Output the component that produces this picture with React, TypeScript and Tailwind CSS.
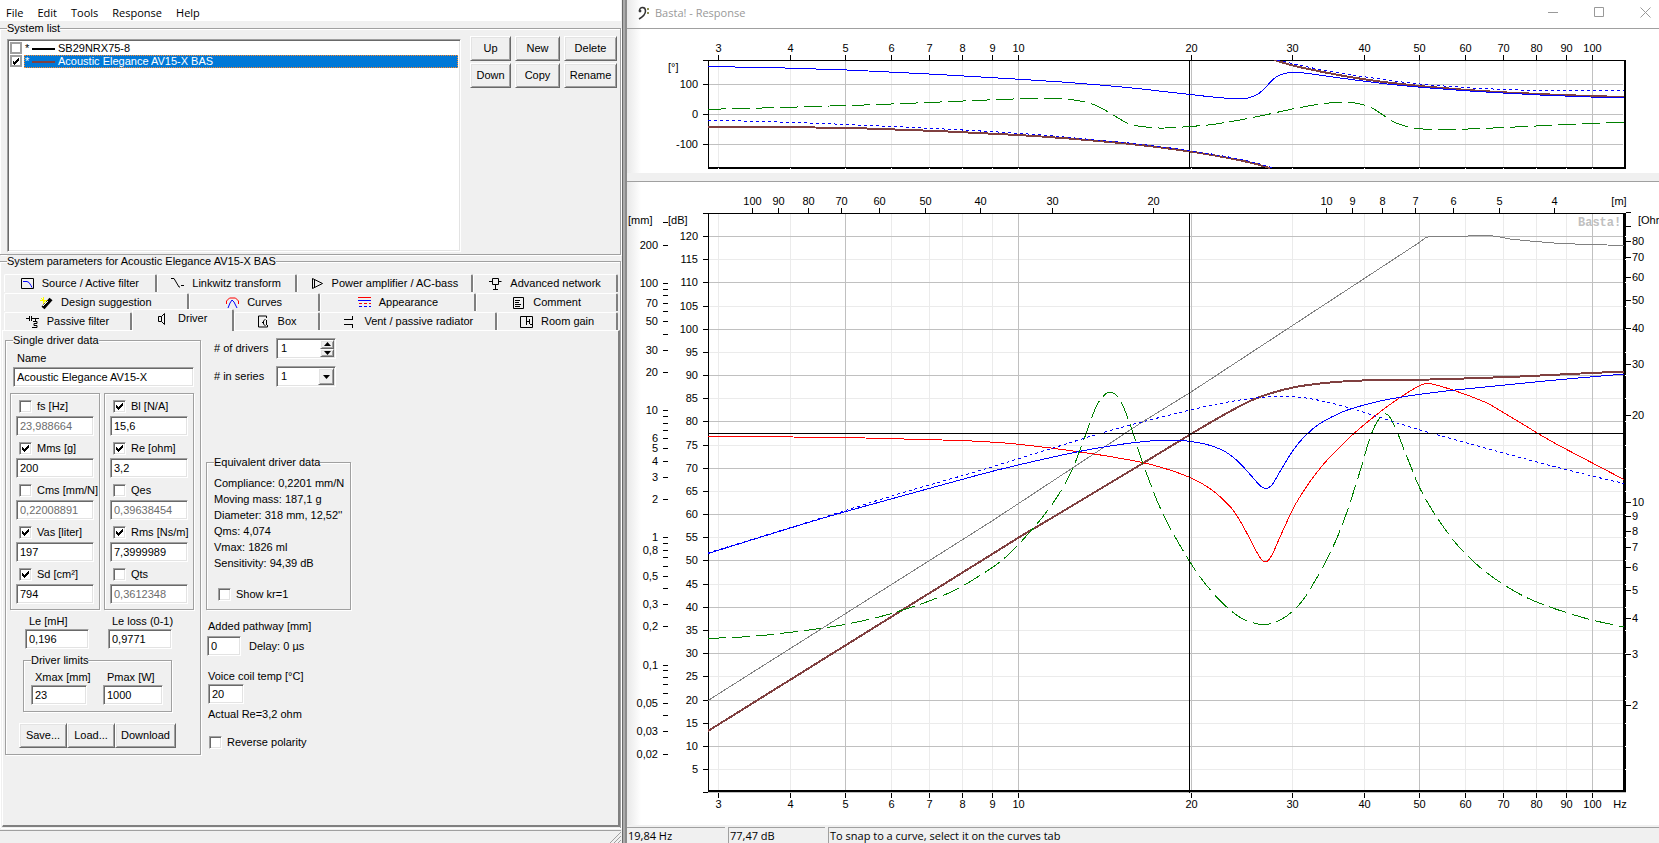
import { ReactNode, useState } from "react";

const sunken =
  "border border-t-[#a0a0a0] border-l-[#a0a0a0] border-r-white border-b-white shadow-[inset_1px_1px_0_#696969,inset_-1px_-1px_0_#e3e3e3]";
const raised =
  "border border-t-white border-l-white border-r-[#696969] border-b-[#696969] shadow-[inset_1px_1px_0_#e3e3e3,inset_-1px_-1px_0_#a0a0a0] bg-[#f0f0f0]";
const etched =
  "border border-[#a0a0a0] shadow-[inset_1px_1px_0_#fff,1px_1px_0_#fff]";

type Point = [number, number];

/* ---------- small controls ---------- */

const Check = ({
  id,
  label,
  checked = false,
}: {
  id: string;
  label: string;
  checked?: boolean;
}) => {
  const [on, setOn] = useState(checked);
  return (
    <div className="flex items-center gap-[5px] whitespace-nowrap">
      <span className="relative flex">
        <input
          id={id}
          type="checkbox"
          checked={on}
          onChange={() => setOn(!on)}
          className={`h-[13px] w-[13px] appearance-none bg-white ${sunken}`}
        />
        {on && <Tick />}
      </span>
      <label htmlFor={id}>{label}</label>
    </div>
  );
};

const Tick = () => (
  <svg
    viewBox="0 0 13 13"
    className="pointer-events-none absolute inset-0 h-full w-full"
  >
    <path d="M3 5v3l2 2 5-5v-3l-5 5z" fill="#000" shapeRendering="crispEdges" />
  </svg>
);

const Field = ({
  id,
  value,
  disabled = false,
  className = "w-full",
}: {
  id: string;
  value: string;
  disabled?: boolean;
  className?: string;
}) => (
  <input
    id={id}
    type="text"
    aria-label={id}
    defaultValue={value}
    disabled={disabled}
    className={`h-5 min-w-0 bg-white px-[3px] text-black disabled:text-[#6d6d6d] ${sunken} ${className}`}
  />
);

const Group = ({
  title,
  className = "",
  children,
}: {
  title: string;
  className?: string;
  children: ReactNode;
}) => (
  <fieldset className={`min-w-0 ${etched} ${className}`}>
    <legend className="ml-[7px] bg-[#f0f0f0] leading-[13px]">{title}</legend>
    {children}
  </fieldset>
);

const PushButton = ({ children }: { children: ReactNode }) => (
  <button type="button" className={`h-[25px] px-1 ${raised}`}>
    {children}
  </button>
);

/* ---------- system list ---------- */

const systems = [
  { name: "SB29NRX75-8", color: "bg-black", checked: false },
  { name: "Acoustic Elegance AV15-X BAS", color: "bg-[#804040]", checked: true },
];

const SystemList = () => (
  <Group title="System list" className="mt-px border-l-0">
    <div className="flex items-start gap-[9px] pr-[3px] pb-[2px] pl-[7px]">
      <ul className={`mt-1 h-[213px] flex-1 bg-white p-[2px] ${sunken}`}>
        {systems.map((s, i) => (
          <li key={s.name} className="flex h-[13px] items-stretch">
            <span className="relative mr-[2px] flex">
              <input
                id={`system-${i}`}
                type="checkbox"
                defaultChecked={s.checked}
                className="h-3 w-3 appearance-none border-2 border-[#a0a0a0] bg-white"
              />
              {s.checked && <Tick />}
            </span>
            <label
              htmlFor={`system-${i}`}
              className={`flex flex-1 items-center border border-dotted leading-[11px] ${
                s.checked
                  ? "border-[#ff8728] bg-[#0078d7] text-white"
                  : "border-white"
              }`}
            >
              <span className="w-[7px]">*</span>
              <span className={`mr-[3px] h-[2px] w-[23px] ${s.color}`} />
              {s.name}
            </label>
          </li>
        ))}
      </ul>
      <div className="mt-px grid grid-cols-[41px_45px_53px] gap-x-1 gap-y-[2px]">
        {["Up", "New", "Delete", "Down", "Copy", "Rename"].map((b) => (
          <PushButton key={b}>{b}</PushButton>
        ))}
      </div>
    </div>
  </Group>
);

/* ---------- tabs ---------- */

const icons: Record<string, ReactNode> = {
  source: (
    <>
      <path d="M.5 1.500h12v10h-12z" />
      <path d="M2 4.500h4l2 1 2 3 1 2" stroke="#00f" />
    </>
  ),
  linkwitz: <path d="M0 1.500h3l5 8.500h1M10 8.500h3" />,
  amp: <path d="M1.500 1.500v10l10-5zM3.500 3v7" />,
  network: <path d="M0 4.500h3.500M9.500 4.500h3M3.500 1.500h6v6h-6zM6.500 8v4M4 12.500h5" />,
  design: (
    <>
      <path d="M3 12l8-9" strokeWidth="4" />
      <path d="M3 10l5-5" stroke="#fff" />
      <path d="M3.500 1v7M0 4.500h7M1 2l5 5" stroke="#ff0" />
    </>
  ),
  curves: (
    <>
      <path d="M.5 8v-3l3-3h6l3 3v3" stroke="#f00" />
      <path d="M2 12l2-5 2-3 2 2 3 6" stroke="#00f" />
    </>
  ),
  appearance: (
    <>
      <path d="M0 1.500h13" stroke="#f00" />
      <path d="M0 4.500h13" stroke="#00f" />
      <path d="M1 7.500h12" stroke="#f00" strokeDasharray="3 2" />
      <path d="M1 10.500h12" stroke="#00f" strokeDasharray="3 2" />
    </>
  ),
  comment: <path d="M1.500 1.500h10v11h-10zM3 4.500h5M3 6.500h4M3 8.500h6M3 10.500h5" />,
  passive: (
    <path d="M0 3.500h3M3.500 1v5M5.500 1v5M6 3.500h7M9.500 4v2M7 6.500h4v2h-3v2h3v2h-5" />
  ),
  driver: <path d="M1.500 4.500h3v5h-3zM4.500 4.500l3-3v11l-3-3" />,
  box: <path d="M9.500 3v-2h-8v11h9v-2M8.500 4l-2 2v3l2 2M9.500 5v5M5 7.500h2" />,
  vent: <path d="M1 4.500h8M1 9.500h8M9.500 1v4M9.500 9v4" />,
  room: <path d="M.5 1.500h12v11h-12zM6.500 2v8M6.500 6.500h3M9.500 4v5M10 9.500h3" />,
};

const tabRows = [
  {
    cols: "grid-cols-[153fr_140fr_177fr_145fr]",
    tabs: [
      ["source", "Source / Active filter"],
      ["linkwitz", "Linkwitz transform"],
      ["amp", "Power amplifier / AC-bass"],
      ["network", "Advanced network"],
    ],
  },
  {
    cols: "grid-cols-[185fr_132fr_156fr_142fr]",
    tabs: [
      ["design", "Design suggestion"],
      ["curves", "Curves"],
      ["appearance", "Appearance"],
      ["comment", "Comment"],
    ],
  },
  {
    cols: "grid-cols-[128fr_102fr_87fr_177fr_121fr]",
    tabs: [
      ["passive", "Passive filter"],
      ["driver", "Driver"],
      ["box", "Box"],
      ["vent", "Vent / passive radiator"],
      ["room", "Room gain"],
    ],
  },
];

const Tabs = () => (
  <div role="tablist" className="mr-[2px] ml-1 pt-[5px]">
    {tabRows.map((row) => (
      <div key={row.cols} className={`grid grid-rows-[19px] items-end ${row.cols}`}>
        {row.tabs.map(([icon, label]) => (
          <button
            key={label}
            type="button"
            role="tab"
            aria-selected={icon === "driver"}
            className={`flex items-center justify-center gap-[7px] rounded-t-[2px] border-t border-r-2 border-l border-t-white border-r-[#808080] border-l-white bg-[#f0f0f0] whitespace-nowrap ${
              icon === "driver" ? "z-10 -mb-px h-[22px] pb-1" : "h-[18px]"
            } ${icon === "passive" ? "border-r-0" : ""}`}
          >
            <svg
              viewBox="0 0 14 14"
              className="h-[14px] w-[14px]"
              fill="none"
              stroke="#000"
            >
              {icons[icon]}
            </svg>
            {label}
          </button>
        ))}
      </div>
    ))}
  </div>
);

/* ---------- driver page ---------- */

interface Param {
  label: string;
  value: string;
  checked: boolean;
}

const leftParams: Param[] = [
  { label: "fs [Hz]", value: "23,988664", checked: false },
  { label: "Mms [g]", value: "200", checked: true },
  { label: "Cms [mm/N]", value: "0,22008891", checked: false },
  { label: "Vas [liter]", value: "197", checked: true },
  { label: "Sd [cm²]", value: "794", checked: true },
];

const rightParams: Param[] = [
  { label: "Bl [N/A]", value: "15,6", checked: true },
  { label: "Re [ohm]", value: "3,2", checked: true },
  { label: "Qes", value: "0,39638454", checked: false },
  { label: "Rms [Ns/m]", value: "7,3999989", checked: true },
  { label: "Qts", value: "0,3612348", checked: false },
];

const ParamPanel = ({ params }: { params: Param[] }) => (
  <div className={`w-[90px] px-[5px] pb-[5px] ${etched}`}>
    {params.map((p) => (
      <div key={p.label}>
        <div className="flex h-[22px] items-center pt-[2px] pl-[3px]">
          <Check id={`use ${p.label}`} label={p.label} checked={p.checked} />
        </div>
        <Field id={p.label} value={p.value} disabled={!p.checked} />
      </div>
    ))}
  </div>
);

const LabelledField = ({
  label,
  value,
  className,
}: {
  label: string;
  value: string;
  className: string;
}) => (
  <div className={`flex flex-col gap-px whitespace-nowrap ${className}`}>
    <label htmlFor={label} className="pl-1 leading-[13px]">
      {label}
    </label>
    <Field id={label} value={value} />
  </div>
);

const SingleDriver = () => (
  <Group title="Single driver data" className="w-[196px]">
    <div className="px-1">
      <div className="flex flex-col pl-[3px]">
        <label htmlFor="Name" className="pt-[5px] pb-[2px] pl-1 leading-[13px]">
          Name
        </label>
        <Field id="Name" value="Acoustic Elegance AV15-X" className="w-[181px]" />
      </div>
      <div className="mt-[6px] flex gap-1">
        <ParamPanel params={leftParams} />
        <ParamPanel params={rightParams} />
      </div>
      <div className="mt-[5px] flex gap-[19px] pl-[15px]">
        <LabelledField label="Le [mH]" value="0,196" className="w-16" />
        <LabelledField label="Le loss (0-1)" value="0,9771" className="w-16" />
      </div>
      <Group title="Driver limits" className="mt-[5px] ml-[13px] w-[149px]">
        <div className="flex gap-4 pt-1 pr-[6px] pb-[6px] pl-[7px]">
          <LabelledField label="Xmax [mm]" value="23" className="w-14" />
          <LabelledField label="Pmax [W]" value="1000" className="w-[60px]" />
        </div>
      </Group>
      <div className="mt-[11px] mb-[6px] ml-[9px] grid w-[157px] grid-cols-[48px_48px_61px]">
        <PushButton>Save...</PushButton>
        <PushButton>Load...</PushButton>
        <PushButton>Download</PushButton>
      </div>
    </div>
  </Group>
);

const driverData = [
  "Compliance: 0,2201 mm/N",
  "Moving mass: 187,1 g",
  "Diameter: 318 mm, 12,52''",
  "Qms: 4,074",
  "Vmax: 1826 ml",
  "Sensitivity: 94,39 dB",
];

const DriverSide = () => (
  <div className="flex w-[145px] flex-col whitespace-nowrap">
    <div className="mt-1 flex items-center pl-2">
      <label htmlFor="drivers" className="w-[62px]">
        # of drivers
      </label>
      <div className={`flex h-[21px] w-[60px] bg-white p-px ${sunken}`}>
        <input
          id="drivers"
          type="text"
          defaultValue="1"
          className="w-[43px] min-w-0 px-[3px]"
        />
        <div className="flex w-[14px] flex-col">
          <button
            type="button"
            aria-label="More drivers"
            className={`flex flex-1 items-center justify-center ${raised}`}
          >
            <svg viewBox="0 0 7 4" className="h-1 w-[7px]">
              <path d="M0 4h7l-3.500-4z" />
            </svg>
          </button>
          <button
            type="button"
            aria-label="Fewer drivers"
            className={`flex flex-1 items-center justify-center ${raised}`}
          >
            <svg viewBox="0 0 7 4" className="h-1 w-[7px]">
              <path d="M0 0h7l-3.500 4z" />
            </svg>
          </button>
        </div>
      </div>
    </div>
    <div className="mt-[7px] flex items-center pl-2">
      <label htmlFor="series" className="w-[62px]">
        # in series
      </label>
      <div className={`relative h-[21px] w-[60px] bg-white p-px ${sunken}`}>
        <select
          id="series"
          className="h-full w-full appearance-none px-[3px] leading-[15px]"
        >
          <option>1</option>
        </select>
        <span
          className={`pointer-events-none absolute top-px right-px bottom-px flex w-4 items-center justify-center ${raised}`}
        >
          <svg viewBox="0 0 7 4" className="h-1 w-[7px]">
            <path d="M0 0h7l-3.500 4z" />
          </svg>
        </span>
      </div>
    </div>
    <Group title="Equivalent driver data" className="mt-[69px]">
      <div className="px-[7px] pt-[6px] pb-2">
        {driverData.map((d) => (
          <p key={d} className="leading-4">
            {d}
          </p>
        ))}
        <div className="pt-[17px] pl-1">
          <Check id="kr" label="Show kr=1" />
        </div>
      </div>
    </Group>
    <label htmlFor="Added pathway" className="mt-[10px] pl-[2px] leading-[13px]">
      Added pathway [mm]
    </label>
    <div className="mt-[3px] flex items-center gap-2 pl-px">
      <Field id="Added pathway" value="0" className="w-[34px]" />
      <span>Delay: 0 µs</span>
    </div>
    <label
      htmlFor="Voice coil temp"
      className="mt-[14px] pl-[2px] leading-[13px]"
    >
      Voice coil temp [°C]
    </label>
    <div className="mt-px flex pl-[2px]">
      <Field id="Voice coil temp" value="20" className="w-9" />
    </div>
    <p className="mt-1 mb-[15px] pl-[2px] leading-[13px]">Actual Re=3,2 ohm</p>
    <div className="pl-[3px]">
      <Check id="reverse" label="Reverse polarity" />
    </div>
  </div>
);

const MainWindow = () => (
  <div className="flex w-[622px] shrink-0 flex-col bg-[#f0f0f0] pr-px">
    <nav className="flex h-[21px] items-center gap-[14px] bg-white px-[6px] pt-[3px] font-['Open_Sans',sans-serif]">
      {["File", "Edit", "Tools", "Response", "Help"].map((m) => (
        <button key={m} type="button">
          {m}
        </button>
      ))}
    </nav>
    <SystemList />
    <fieldset
      className={`flex min-w-0 flex-1 flex-col border-b-0 border-l-0 ${etched}`}
    >
      <legend className="ml-[7px] bg-[#f0f0f0] leading-[13px]">
        System parameters for Acoustic Elegance AV15-X BAS
      </legend>
      <div className="flex h-full flex-col pb-px">
        <Tabs />
        <div
          role="tabpanel"
          className="ml-[2px] flex flex-1 items-start gap-[5px] border-t border-r-2 border-b-2 border-l border-t-white border-r-[#808080] border-b-[#808080] border-l-white pt-[3px] pl-[2px]"
        >
          <SingleDriver />
          <DriverSide />
        </div>
      </div>
    </fieldset>
    <footer className="mt-[2px] flex h-[14px] justify-end border-t border-[#a0a0a0]">
      <svg viewBox="0 0 12 12" className="h-3 w-3" stroke="#a0a0a0">
        <path d="M1 12L12 1M5 12L12 5M9 12L12 9" />
      </svg>
    </footer>
  </div>
);

/* ---------- response charts ---------- */

const LEFT = 708;
const RIGHT = 1623;

const freqs = [3, 4, 5, 6, 7, 8, 9, 10, 20, 30, 40, 50, 60, 70, 80, 90, 100];
const majorFreqs = [5, 10, 20, 50, 100];
const freqX = (f: number) => Math.round(1018 + 574 * Math.log10(f / 10));
const waveX = (l: number) => Math.round(1326 - 574 * Math.log10(l / 10));
const phaseY = (deg: number) => Math.round(114 - 0.3 * deg);
const dbY = (db: number) => Math.round(236 + (120 - db) * 4.635);
const mmY = (mm: number) => Math.round(537.4 - 127.2 * Math.log10(mm));
const ohmY = (r: number) => Math.round(502.4 - 290 * Math.log10(r / 10));

// Catmull-Rom through the sample points
const curve = (pts: Point[]) => {
  let d = `M${pts[0][0]} ${pts[0][1]}`;
  for (let i = 0; i < pts.length - 1; i++) {
    const p0 = pts[i - 1] ?? pts[i];
    const p1 = pts[i];
    const p2 = pts[i + 1];
    const p3 = pts[i + 2] ?? p2;
    const h = (p2[0] - p1[0]) / 3;
    const m1 = (p2[1] - p0[1]) / (p2[0] - p0[0]);
    const m2 = (p3[1] - p1[1]) / (p3[0] - p1[0]);
    d += `C${p1[0] + h} ${p1[1] + m1 * h} ${p2[0] - h} ${p2[1] - m2 * h} ${p2[0]} ${p2[1]}`;
  }
  return d;
};

const Line = ({
  pts,
  color,
  width = 1,
  dash,
}: {
  pts: Point[];
  color: string;
  width?: number;
  dash?: string;
}) => (
  <path
    d={curve(pts)}
    fill="none"
    stroke={color}
    strokeWidth={width}
    strokeDasharray={dash}
    shapeRendering="crispEdges"
  />
);

const phaseBlue: Point[] = [
  [708, 66.500], [785, 68], [847, 70], [895, 72.300], [944, 74.800],
  [1018, 79.200], [1062, 82], [1100, 85], [1140, 88.800], [1190, 94.500],
  [1224, 98], [1245, 98.500], [1250, 97.500], [1258, 94], [1265, 88],
  [1273, 79.500], [1280, 75], [1287, 73], [1295, 72.400], [1304, 73],
  [1340, 78], [1363, 81], [1387, 84], [1420, 87.200], [1465, 90.700],
  [1503, 93], [1540, 95], [1590, 97], [1624, 97.700],
];
const phaseBrownLow: Point[] = [
  [708, 126.800], [780, 127], [850, 128], [895, 129.500], [944, 131.300],
  [1018, 135], [1075, 139], [1140, 145], [1190, 151.500], [1223, 157],
  [1250, 162.500], [1270, 168],
];
const phaseBrownHigh: Point[] = [
  [1274, 60], [1293, 65.500], [1318, 71], [1350, 77], [1380, 81.500],
  [1420, 86], [1465, 89.800], [1503, 92.300], [1560, 95], [1624, 97],
];
const phaseDotLow: Point[] = [
  [708, 120.200], [780, 122], [817, 123.300], [867, 125.400], [930, 128.300],
  [1018, 133.300], [1075, 138], [1138, 144], [1190, 150.700], [1223, 156],
  [1250, 161.500], [1274, 168],
];
const phaseDotHigh: Point[] = [
  [1277, 60], [1310, 67.500], [1340, 73], [1380, 79], [1417, 83.700],
  [1465, 87.500], [1510, 89.700], [1540, 90.500], [1624, 90.500],
];
const phaseGreen: Point[] = [
  [708, 109.300], [770, 107.800], [830, 106], [870, 104.800], [940, 102],
  [1000, 99.500], [1037, 98.300], [1050, 98.300], [1070, 99.500], [1085, 102],
  [1096, 105.500], [1110, 113], [1118, 118], [1127, 123], [1134, 125.300],
  [1150, 127.500], [1165, 128], [1190, 126.500], [1212, 124.500], [1240, 120],
  [1265, 115], [1290, 109.500], [1310, 105.700], [1325, 103.500],
  [1335, 102.500], [1350, 102.300], [1360, 104], [1372, 108], [1383, 115],
  [1396, 123], [1407, 126.500], [1420, 128.800], [1440, 129.500],
  [1460, 129.300], [1500, 127.700], [1540, 125.800], [1580, 124], [1624, 122.300],
];

const PhaseChart = () => (
  <svg
    viewBox="627 29 1032 144"
    className="block w-full"
    fontFamily="'Liberation Sans', sans-serif"
    fontSize="11"
  >
    <clipPath id="phase-area">
      <rect x={LEFT} y="60" width="917" height="109" />
    </clipPath>
    {freqs.map((f) => (
      <g key={f}>
        <rect
          x={freqX(f)}
          y="61"
          width="1"
          height="106"
          fill={majorFreqs.includes(f) ? "#c0c0c0" : "#ebebeb"}
        />
        <rect x={freqX(f)} y="55" width="1" height="5" />
        <text x={freqX(f) + 0.5} y="52" textAnchor="middle">
          {f}
        </text>
      </g>
    ))}
    {[100, 0, -100].map((deg) => (
      <g key={deg}>
        <rect x={LEFT} y={phaseY(deg)} width="915" height="1" fill="#c0c0c0" />
        <rect x="703" y={phaseY(deg)} width="5" height="1" />
        <text x="698" y={phaseY(deg) + 4} textAnchor="end">
          {deg}
        </text>
      </g>
    ))}
    <text x="668" y="71">
      [°]
    </text>
    <rect x="703" y="60" width="922" height="1" />
    <rect x={LEFT} y="60" width="1" height="109" />
    <rect x={LEFT} y="167" width="918" height="2" />
    <rect x="1624" y="60" width="2" height="109" />
    {freqs.map((f) => (
      <rect key={f} x={freqX(f)} y="168" width="1" height="1" fill="#fff" />
    ))}
    <rect x="1189" y="60" width="1" height="108" />
    <g clipPath="url(#phase-area)">
      <Line pts={phaseBrownLow} color="#804040" width={2} />
      <Line pts={phaseBrownHigh} color="#804040" width={2} />
      <Line pts={phaseBlue} color="#00f" />
      <Line pts={phaseDotLow} color="#00f" dash="3 3" />
      <Line pts={phaseDotHigh} color="#00f" dash="3 3" />
      <Line pts={phaseGreen} color="#008000" dash="18 6" />
    </g>
  </svg>
);

const brown: Point[] = [
  [708, 731], [1018, 538], [1050, 519], [1140, 465], [1191, 434], [1220, 417],
  [1250, 401], [1270, 393.500], [1293, 387.500], [1320, 383.500], [1350, 381],
  [1385, 380], [1430, 379.500], [1480, 378], [1520, 376.500], [1570, 374],
  [1624, 371.500],
];
const grey =
  "M708 700.500L992 521 1140 423.500 1191 392 1420 242 1426 237.500 1430 236.500 1466 236.500 1470 235.500 1490 235.500 1500 237 1510 239 1530 241 1560 243.500 1590 244.500 1624 245.500";
const red: Point[] = [
  [708, 436.300], [793, 437], [865, 438], [942, 440], [980, 441.400],
  [1019, 444.300], [1084, 452.500], [1140, 462], [1165, 468.500],
  [1191, 478], [1212, 490], [1230, 506.500], [1239, 519], [1246, 531.500],
  [1255, 549], [1261, 559], [1264, 561.500], [1267, 561.500], [1272, 555],
  [1280, 537], [1287, 521.500], [1295, 505], [1310, 481.500], [1325, 462.500],
  [1340, 447], [1355, 432.500], [1380, 412], [1400, 397.500], [1417, 387],
  [1424, 384], [1429, 383.500], [1440, 386], [1460, 392.500], [1487, 403],
  [1500, 410.500], [1520, 422.500], [1550, 440.500], [1580, 456.500],
  [1624, 479.500],
];
const blue: Point[] = [
  [708, 553.500], [820, 519], [900, 496.500], [980, 474.500], [1019, 464.800],
  [1079, 451.500], [1120, 444.500], [1150, 441], [1163, 440.300],
  [1180, 440.500], [1191, 441.500], [1205, 444], [1220, 449], [1231, 455.500],
  [1241, 464.500], [1251, 475.500], [1260, 485.500], [1264, 488], [1268, 488],
  [1273, 483.500], [1280, 471.500], [1293, 450.500], [1305, 436],
  [1320, 423.500], [1340, 413], [1352, 408.500], [1380, 401], [1405, 396.500],
  [1430, 393], [1460, 389.500], [1500, 385.500], [1550, 380.500],
  [1590, 377], [1624, 374],
];
const dotted: Point[] = [
  [708, 553], [820, 518.500], [900, 493.500], [980, 470.500], [1019, 458.500],
  [1058, 446.500], [1100, 433.500], [1140, 422.500], [1180, 412.500],
  [1210, 405.500], [1240, 400], [1265, 397], [1290, 396.500], [1315, 399.500],
  [1350, 408], [1380, 417.500], [1420, 430], [1460, 441], [1500, 452],
  [1550, 465.500], [1590, 475.500], [1624, 483.500],
];
const green: Point[] = [
  [708, 638.500], [750, 636.500], [782, 633.300], [820, 628.500],
  [846, 624.300], [880, 616.700], [913, 606.700], [937, 598], [960, 587.500],
  [990, 569], [1003, 559.500], [1018, 545], [1032, 529.500], [1045, 514],
  [1059, 494], [1072, 470], [1083, 442], [1096, 407], [1104, 395.500],
  [1110, 392], [1117, 396], [1123, 406], [1131, 427], [1140, 455],
  [1149, 480], [1158, 503], [1168, 524], [1178, 542], [1190, 562], [1200, 577],
  [1210, 589.500], [1220, 600.500], [1232, 611.500], [1243, 619],
  [1257, 623.800], [1265, 624.500], [1271, 623.500], [1281, 619.500],
  [1290, 613.500], [1303, 600], [1315, 581], [1325, 563], [1332, 549],
  [1338, 535.500], [1344, 520], [1350, 503], [1356, 484], [1362, 465],
  [1368, 444], [1373, 430], [1377, 422], [1382, 415], [1385, 413.500],
  [1389, 416], [1395, 427], [1400, 439], [1405, 452], [1411, 467],
  [1417, 482], [1425, 498], [1436, 516], [1450, 536], [1460, 548],
  [1472, 560], [1482, 569], [1496, 579.500], [1515, 591.500], [1533, 600.500],
  [1557, 609.500], [1590, 619.500], [1624, 627],
];

const dbs = Array.from({ length: 24 }, (_, i) => 120 - i * 5);
const waves = [100, 90, 80, 70, 60, 50, 40, 30, 20, 10, 9, 8, 7, 6, 5, 4];
const mmLabels = [
  200, 100, 70, 50, 30, 20, 10, 6, 5, 4, 3, 2, 1, 0.8, 0.5, 0.3, 0.2, 0.1, 0.05,
  0.03, 0.02,
];
const mmTicks = [
  300, 90, 80, 60, 40, 9, 8, 7, 0.9, 0.7, 0.6, 0.4, 0.09, 0.08, 0.07, 0.06, 0.04,
];
const ohms = [80, 70, 60, 50, 40, 30, 20, 10, 9, 8, 7, 6, 5, 4, 3, 2];

const ResponseChart = () => (
  <svg
    viewBox="627 182 1032 643"
    className="block w-full"
    fontFamily="'Liberation Sans', sans-serif"
    fontSize="11"
  >
    {dbs
      .filter((db) => db % 10 !== 0)
      .map((db) => (
        <rect key={db} x={LEFT} y={dbY(db)} width="915" height="1" fill="#ebebeb" />
      ))}
    {freqs.map((f) => (
      <g key={f}>
        <rect
          x={freqX(f)}
          y="214"
          width="1"
          height="576"
          fill={majorFreqs.includes(f) ? "#c0c0c0" : "#ebebeb"}
        />
        <rect x={freqX(f)} y="793" width="1" height="5" />
        <text x={freqX(f) + 0.5} y="808" textAnchor="middle">
          {f}
        </text>
      </g>
    ))}
    {dbs.map((db) => (
      <g key={db}>
        {db % 10 === 0 && (
          <rect x={LEFT} y={dbY(db)} width="915" height="1" fill="#c0c0c0" />
        )}
        <rect x="703" y={dbY(db)} width="5" height="1" />
        <text x="698" y={dbY(db) + 4} textAnchor="end">
          {db}
        </text>
      </g>
    ))}
    {waves.map((l) => (
      <g key={l}>
        <rect x={waveX(l)} y="208" width="1" height="5" />
        <text x={waveX(l) + 0.5} y="205" textAnchor="middle">
          {l}
        </text>
      </g>
    ))}
    {[...mmLabels, ...mmTicks].map((mm) => (
      <rect key={mm} x="663" y={mmY(mm)} width="5" height="1" />
    ))}
    {mmLabels.map((mm) => (
      <text key={mm} x="658" y={mmY(mm) + 4} textAnchor="end">
        {String(mm).replace(".", ",")}
      </text>
    ))}
    <text x="628" y="224">
      [mm]
    </text>
    <text x="668" y="224">
      [dB]
    </text>
    <text x="1619" y="205" textAnchor="middle">
      [m]
    </text>
    <text x="1620" y="808" textAnchor="middle">
      Hz
    </text>
    <text x="1638" y="224">
      [Ohm]
    </text>
    <text
      x="1578"
      y="226"
      fontFamily="'Liberation Mono', monospace"
      fontWeight="bold"
      fontSize="12"
      fill="#c0c0c0"
    >
      Basta!
    </text>

    <rect x="703" y="213" width="922" height="1" />
    <rect x={LEFT} y="213" width="1" height="578" />
    <rect x={LEFT} y="790" width="918" height="2" />
    <rect x={LEFT} y="792" width="918" height="1" fill="#c0c0c0" />
    <rect x="703" y="792" width="5" height="1" />
    <rect x={RIGHT} y="213" width="3" height="579" />
    {dbs.map((db) => (
      <rect key={db} x="1625" y={dbY(db)} width="1" height="1" fill="#fff" />
    ))}
    {[100, 90, ...ohms].map((r) => (
      <rect key={r} x="1626" y={ohmY(r)} width="5" height="1" />
    ))}
    {ohms.map((r) => (
      <text key={r} x="1632" y={ohmY(r) + 4}>
        {r}
      </text>
    ))}

    <path d={grey} fill="none" stroke="#808080" shapeRendering="crispEdges" />
    <Line pts={brown} color="#804040" width={2} />
    <Line pts={red} color="#f00" />
    <Line pts={blue} color="#00f" />
    <Line pts={dotted} color="#00f" dash="3 3" />
    <Line pts={green} color="#008000" dash="18 6" />

    <rect x={LEFT} y="433" width="915" height="1" />
    <rect x="1189" y="213" width="1" height="580" />
  </svg>
);

const ResponseWindow = () => (
  <div className="flex min-w-0 flex-1 flex-col bg-linear-to-r from-[#e8e8e8] to-white to-[14px]">
    <header className="flex h-7 items-center pr-2 pb-[3px] pl-[11px] font-['Open_Sans',sans-serif] text-[#999]">
      <svg viewBox="0 0 12 14" className="h-[14px] w-3" fill="none" stroke="#333">
        <path d="M1.500 4.500c0-4 6-4 6 .5 0 4-3 6-6.500 8" strokeWidth="1.500" />
        <circle cx="2" cy="5" r="1" fill="#333" />
        <path d="M10 2v2M10 6v2" stroke="#676b1e" strokeWidth="1.500" />
      </svg>
      <h1 className="ml-[5px] flex-1 leading-4">Basta! - Response</h1>
      <div className="flex gap-[35px]">
        <button type="button" aria-label="Minimize">
          <svg viewBox="0 0 11 11" className="h-[11px] w-[11px]" stroke="#999">
            <path d="M0 5.500h10" />
          </svg>
        </button>
        <button type="button" aria-label="Maximize">
          <svg
            viewBox="0 0 11 11"
            className="h-[11px] w-[11px]"
            stroke="#999"
            fill="none"
          >
            <path d="M.5.500h9v9h-9z" />
          </svg>
        </button>
        <button type="button" aria-label="Close">
          <svg viewBox="0 0 11 11" className="h-[11px] w-[11px]" stroke="#999">
            <path d="M.5.500l10 10M10.500.500l-10 10" />
          </svg>
        </button>
      </div>
    </header>
    <section className="border-t border-[#a0a0a0]">
      <PhaseChart />
    </section>
    <div className="h-2 bg-[#f0f0f0]" />
    <section className="border-t border-[#a0a0a0]">
      <ResponseChart />
    </section>
    <footer className="flex min-h-[18px] flex-1 gap-[3px] bg-[#f0f0f0] pt-[2px] font-['Open_Sans',sans-serif] leading-4 whitespace-nowrap">
      <span className="w-[98px] border-t border-[#a0a0a0] pl-px">19,84 Hz</span>
      <span className="w-[97px] border-t border-l border-[#a0a0a0] pl-px">
        77,47 dB
      </span>
      <span className="flex-1 border-t border-l border-[#a0a0a0] pl-px">
        To snap to a curve, select it on the curves tab
      </span>
    </footer>
  </div>
);

const App = () => (
  <div className="flex min-h-screen bg-[#f0f0f0] font-['Liberation_Sans',sans-serif] text-[11px] leading-[13px] text-black">
    <MainWindow />
    <div className="w-[5px] shrink-0 border-r-2 border-l border-r-[#8c8c8c] border-l-[#696969] bg-[#ababab]" />
    <ResponseWindow />
  </div>
);

export default App;
